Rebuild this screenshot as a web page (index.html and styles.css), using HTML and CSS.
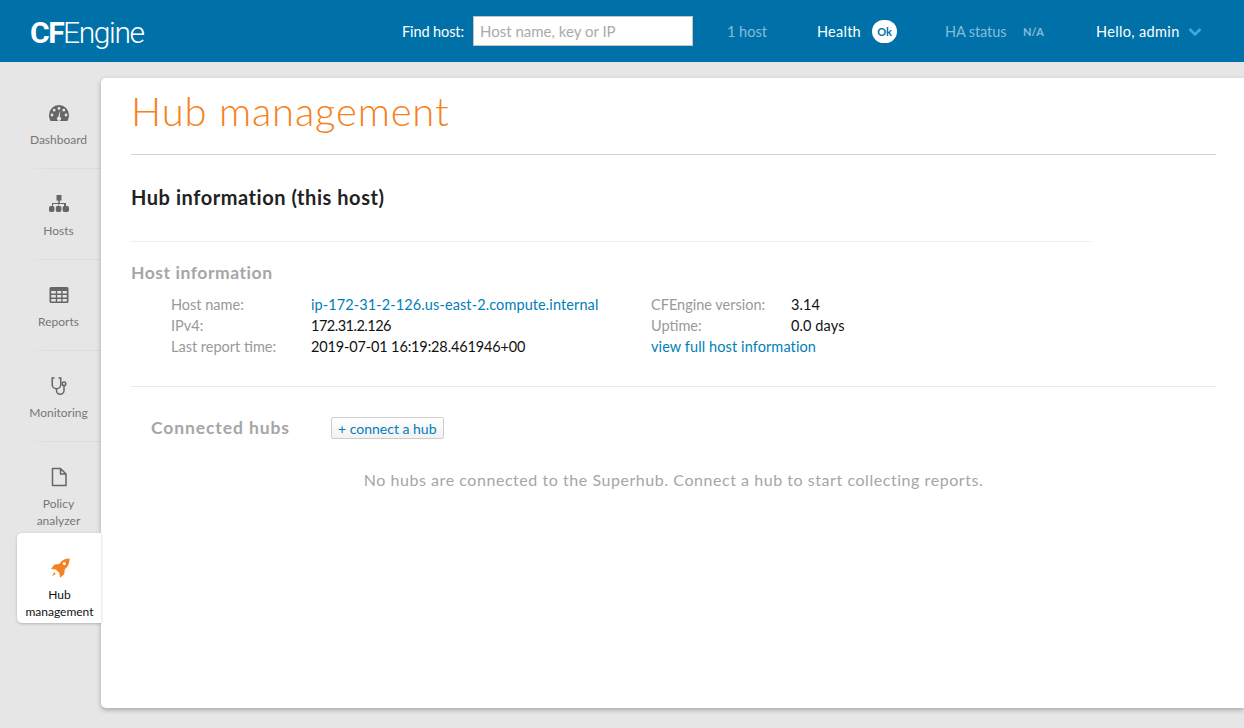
FILE: index.html
```html
<!DOCTYPE html>
<html lang="en">
<head>
<meta charset="utf-8">
<title>Hub management</title>
<link rel="stylesheet" href="styles.css">
</head>
<body>
<header class="topbar">
  <a class="logo"><b>CF</b>Engine</a>
  <div class="find"><label class="find-label">Find host:</label><input class="find-input" placeholder="Host name, key or IP"></div>
  <span class="hosts muted">1 host</span>
  <span class="health">Health</span><span class="ok">Ok</span>
  <span class="ha muted">HA status</span><span class="na">N/A</span>
  <span class="hello">Hello, admin</span>
  <svg class="chev" viewBox="0 0 14 10"><path d="M1.500 2 7 7.500 12.500 2" fill="none" stroke="#3fa9dc" stroke-width="2.600"/></svg>
</header>
<div class="layout">
  <nav class="side">
    <a class="nav-item">
      <svg class="ico" viewBox="0 0 20 20"><path fill="#666" fill-rule="evenodd" d="M10 2a10 10 0 0 0-10 10c0 2.300.6 4.300 1.600 6h16.800c1-1.700 1.600-3.700 1.600-6A10 10 0 0 0 10 2Zm0 2a1.400 1.400 0 1 1 0 2.800A1.400 1.400 0 0 1 10 4ZM5.200 5.800a1.400 1.400 0 1 1 0 2.800 1.400 1.400 0 0 1 0-2.800Zm9.600 0a1.400 1.400 0 1 1 0 2.800 1.400 1.400 0 0 1 0-2.800ZM3 10.600a1.400 1.400 0 1 1 0 2.800 1.400 1.400 0 0 1 0-2.800Zm14 0a1.400 1.400 0 1 1 0 2.800 1.400 1.400 0 0 1 0-2.800ZM11.300 7.200l-.5 6.700a2 2 0 1 1-1.600 0Z"/></svg>
      <span>Dashboard</span>
    </a>
    <a class="nav-item">
      <svg class="ico" viewBox="0 0 20 20"><path fill="#666" d="M7.500 1h5v5.500h-1.700V9H17v3h1.300a1.700 1.700 0 0 1 1.700 1.700v2.600a1.700 1.700 0 0 1-1.700 1.700h-3a1.700 1.700 0 0 1-1.700-1.700v-2.600a1.700 1.700 0 0 1 1.400-1.700v-2h-5.200v2h1.200a1.700 1.700 0 0 1 1.400 1.700v2.600a1.700 1.700 0 0 1-1.700 1.700H8.500a1.700 1.700 0 0 1-1.700-1.700v-2.600a1.700 1.700 0 0 1 1.400-1.700h1v-2H4v2a1.700 1.700 0 0 1 1.400 1.700v2.600A1.700 1.700 0 0 1 3.700 18h-2A1.700 1.700 0 0 1 0 16.300v-2.600A1.700 1.700 0 0 1 1.700 12H3V9h6.200V6.500H7.500Z"/></svg>
      <span>Hosts</span>
    </a>
    <a class="nav-item">
      <svg class="ico" viewBox="0 0 20 20"><path fill="#666" fill-rule="evenodd" d="M2 2h16a1.500 1.500 0 0 1 1.500 1.500v13A1.500 1.500 0 0 1 18 18H2a1.500 1.500 0 0 1-1.500-1.500v-13A1.500 1.500 0 0 1 2 2Zm.2 4v2.500h4.600V6Zm6 0v2.500h4V6Zm5.400 0v2.500h4.200V6ZM2.200 10v2.500h4.600V10Zm6 0v2.500h4V10Zm5.400 0v2.500h4.200V10ZM2.200 14v2.400h4.600V14Zm6 0v2.400h4V14Zm5.400 0v2.400h4.200V14Z"/></svg>
      <span>Reports</span>
    </a>
    <a class="nav-item">
      <svg class="ico" viewBox="0 0 20 20"><path fill="none" stroke="#666" stroke-width="1.500" stroke-linecap="round" d="M5 2H3.200v6.500a4.300 4.300 0 0 0 8.600 0V2H10M7.500 13v1.500c0 2.200 1.700 3.800 3.700 3.800s3.800-1.600 3.800-3.800V10"/><circle cx="15" cy="7.800" r="1.800" fill="none" stroke="#666" stroke-width="1.500"/></svg>
      <span>Monitoring</span>
    </a>
    <a class="nav-item two-line">
      <svg class="ico" viewBox="0 0 20 20"><path fill="none" stroke="#666" stroke-width="1.500" stroke-linejoin="round" d="M3.500 1.500h8l5.500 5.500v11.500H3.500ZM11.500 1.500V7H17"/></svg>
      <span>Policy analyzer</span>
    </a>
    <a class="nav-item active">
      <svg class="ico" viewBox="0 0 20 20"><path fill="#f68121" fill-rule="evenodd" d="M19.500.5c.3 4.200-1.200 8-4.700 10.800l-.6 5-4.200 3.400-.6-4.700-3.600-3.600-4.800-.4 3.500-4.400 4.800-.5C11.800 2.100 15.300.4 19.500.5ZM14.300 4a1.600 1.600 0 1 0 0 3.200 1.600 1.600 0 0 0 0-3.200ZM4.300 14.200l1.500 1.500-3.800 2.800Z"/></svg>
      <span>Hub management</span>
    </a>
  </nav>
  <main class="panel">
    <h1 class="title">Hub management</h1>
    <h2 class="subtitle">Hub information (this host)</h2>
    <section class="info">
      <h3 class="section-head">Host information</h3>
      <div class="grid">
        <span class="k">Host name:</span><a class="v link">ip-172-31-2-126.us-east-2.compute.internal</a>
        <span class="k">CFEngine version:</span><span class="v">3.14</span>
        <span class="k">IPv4:</span><span class="v ip">172.31.2.126</span>
        <span class="k">Uptime:</span><span class="v">0.0 days</span>
        <span class="k">Last report time:</span><span class="v date">2019-07-01 16:19:28.461946+00</span>
        <a class="link wide">view full host information</a>
      </div>
    </section>
    <section class="hubs">
      <div class="hubs-head"><h3 class="section-head hubs-title">Connected hubs</h3><button class="connect">+ connect a hub</button></div>
      <p class="empty">No hubs are connected to the Superhub. Connect a hub to start collecting reports.</p>
    </section>
  </main>
</div>
</body>
</html>
```
FILE: styles.css
```css
* { box-sizing: border-box; }
html, body { margin: 0; height: 100%; }
body {
  width: 1244px; height: 728px; overflow: hidden;
  background: #e6e6e6;
  font-family: "Lato", "Open Sans", sans-serif;
  font-size: 14px;
  color: #111;
}
.topbar {
  height: 62px; background: #0071a8; color: #fff;
  display: flex; align-items: center;
  padding-left: 30px;
}
.logo { font-family: "Roboto", sans-serif; font-size: 30px; font-weight: 300; letter-spacing: -1.400px; width: 372px; line-height: 1; margin-top: 4px; }
.logo b { font-weight: 700; letter-spacing: -1.500px; }
.find { display: flex; align-items: center; gap: 9px; width: 325px; }
.find-label { font-size: 14.500px; letter-spacing: -.1px; }
.find-input {
  width: 220px; height: 30px; border: 1px solid #c4c4c4; background: #fff;
  padding: 0 6px; font: 15px "Lato", sans-serif; outline: 0;
}
.find-input::placeholder { color: #aaa; opacity: 1; }
.muted { color: #84bcdb; }
.hosts, .health, .ha, .hello { padding-top: 1px; font-size: 14.500px; }
.hosts { width: 90px; }
.health { letter-spacing: .25px; width: 55px; }
.ok {
  width: 25px; height: 23px; border-radius: 12px; background: #fff; color: #0071a8;
  font-size: 11px; font-weight: 700; display: flex; align-items: center; justify-content: center;
  margin-right: 48px;
}
.ha { letter-spacing: -.1px; width: 78px; }
.na { font-size: 11px; font-weight: 700; color: #84bcdb; width: 73px; letter-spacing: .1px; padding-top: 1px; }
.hello { letter-spacing: .35px; width: 92px; }
.chev { width: 14px; height: 10px; margin-top: 1px; }
.layout { display: flex; height: 666px; }
.side { width: 101px; flex: none; padding-top: 16px; display: flex; flex-direction: column; }
.nav-item {
  height: 91px; flex: none; margin-left: 17px;
  display: flex; flex-direction: column; align-items: center;
  padding-top: 25px; color: #777; font-size: 12px; line-height: 17px; text-align: center;
  border-bottom: 1px solid;
  border-image: linear-gradient(to right, transparent 6px, #dcdcdc 34px) 1;
}
.nav-item .ico { width: 20px; height: 20px; margin-bottom: 8px; flex: none; margin-left: -1px; }
.nav-item span { margin-left: -1px; }
.two-line { border-bottom: 0; }
.two-line span { width: 70px; }
.active {
  height: 90px; background: #fff; color: #111; border-bottom: 0; border-image: none;
  border-radius: 5px 0 0 5px; box-shadow: 0 1px 3px rgba(0,0,0,.22);
  position: relative; z-index: 2;
}
.active span { margin-left: 1px; width: 76px; }
.active .ico { margin-left: 2px; }
.panel {
  width: 1143px; height: 630px; margin-top: 16px; background: #fff;
  border-radius: 5px 0 0 5px; box-shadow: 0 2px 5px rgba(0,0,0,.28);
  padding: 0 28px 0 30px;
}
.title {
  margin: 0; height: 77px; border-bottom: 1px solid #d4d4d4;
  font-size: 40px; font-weight: 300; color: #f68121; line-height: 66px; letter-spacing: .8px;
}
.subtitle { margin: 0; padding-top: 29px; height: 87px; font-size: 20px; font-weight: 700; color: #222; line-height: 27px; letter-spacing: .55px; border-bottom: 1px solid #eee; width: 960px; }
.section-head { margin: 0; font-size: 17.500px; font-weight: 700; color: #a6a6a6; line-height: 24px; letter-spacing: .55px; }
.info { padding: 19px 0 29px; border-bottom: 1px solid #eaeaea; }
.grid {
  display: grid; grid-template-columns: 140px 340px 140px 1fr;
  padding: 9px 0 0 40px; line-height: 21px; font-size: 14.500px; letter-spacing: .1px;
}
.k { color: #999; letter-spacing: 0; }
.v { color: #111; }
.ip { letter-spacing: -.5px; }
.date { letter-spacing: -.15px; }
.link { color: #0080b8; }
.wide { grid-column: span 2; }
.hubs { padding: 29px 0 0 20px; }
.hubs-head { display: flex; align-items: center; }
.hubs-title { width: 180px; letter-spacing: .9px; }
.connect {
  height: 22px; padding: 0 6px; border: 1px solid #ccc; border-radius: 2px;
  background: linear-gradient(#fff, #f2f2f2); color: #0080b8; font: 14px "Lato", sans-serif;
}
.empty { margin: 29px 20px 0 0; text-align: center; color: #a6a6a6; font-size: 16px; line-height: 22px; letter-spacing: .55px; }
```
